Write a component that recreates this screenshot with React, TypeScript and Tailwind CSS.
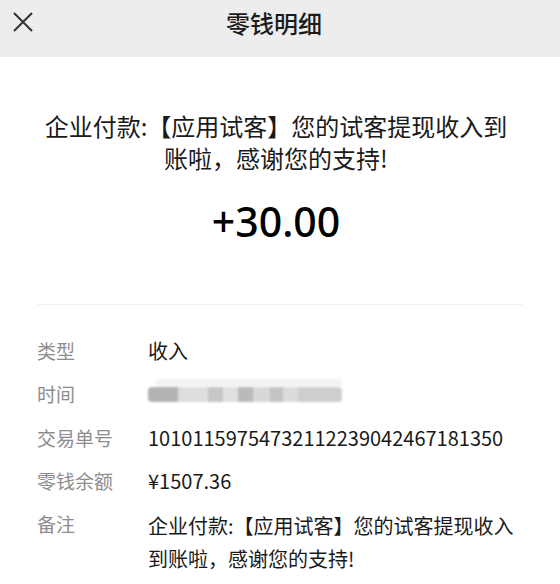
const rows = [
  { label: "类型", value: "收入" },
  { label: "时间", value: null },
  { label: "交易单号", value: "1010115975473211223904246718135" + "0" },
  { label: "零钱余额", value: "¥1507.36" },
];

const remark = "企业付款:【应用试客】您的试客提现收入到账啦，感谢您的支持!";

function BlurredTime() {
  return (
    <div className="flex flex-col gap-[1px] pb-[8px] blur-[1px]">
      <div className="ml-[8px] h-[7px] w-[186px] rounded bg-[#f2f2f2]" />
      <div className="flex h-[15px] w-[194px] overflow-hidden rounded-sm">
        <div className="w-[30px] bg-[#b2b2b2]" />
        <div className="w-[30px] bg-[#dedede]" />
        <div className="w-[15px] bg-[#c6c6c6]" />
        <div className="w-[15px] bg-[#e0e0e0]" />
        <div className="w-[15px] bg-[#bababa]" />
        <div className="w-[17px] bg-[#d8d8d8]" />
        <div className="w-[13px] bg-[#c3c3c3]" />
        <div className="w-[15px] bg-[#dcdcdc]" />
        <div className="w-[44px] bg-[#cecece]" />
      </div>
    </div>
  );
}

export default function App() {
  return (
    <div
      className="h-[584px] w-[560px] overflow-hidden bg-white text-[#1a1a1a]"
      style={{ fontFamily: '"Noto Sans CJK SC", "Noto Sans", sans-serif' }}
    >
      <header className="relative flex h-[57px] items-start justify-center bg-[#ededed] pr-[12px] pt-[7px]">
        <button className="absolute left-[12px] top-[11px] text-[#333]">
          <svg width="22" height="22" viewBox="0 0 22 22" fill="none" stroke="currentColor" strokeWidth="2">
            <path d="M2 2 L20 20 M20 2 L2 20" />
          </svg>
        </button>
        <h1 className="text-[24px] font-medium leading-[32px] text-[#1b1b1b]">零钱明细</h1>
      </header>

      <section className="pl-[39px] pr-[47px] pt-[53px] text-center">
        <p className="text-[24px] leading-[32px]">{remark}</p>
        <div
          className="mt-[21px] text-[41px] font-medium leading-[52px] text-black"
          style={{ fontFamily: '"Noto Sans", sans-serif' }}
        >
          +30.00
        </div>
      </section>

      <div className="mx-[37px] mt-[57px] h-px bg-[#f0f0f0]" />

      <dl className="flex flex-col gap-[13px] px-[37px] pt-[31px] leading-[30px]">
        {rows.map((row) => (
          <div key={row.label} className="flex">
            <dt className="w-[111px] shrink-0 text-[19px] text-[#8d8d8d]">{row.label}</dt>
            <dd className="flex items-center text-[20px]">{row.value ?? <BlurredTime />}</dd>
          </div>
        ))}
        <div className="flex">
          <dt className="w-[111px] shrink-0 text-[19px] text-[#8d8d8d]">备注</dt>
          <dd className="text-[20px] leading-[33px]">{remark}</dd>
        </div>
      </dl>
    </div>
  );
}
